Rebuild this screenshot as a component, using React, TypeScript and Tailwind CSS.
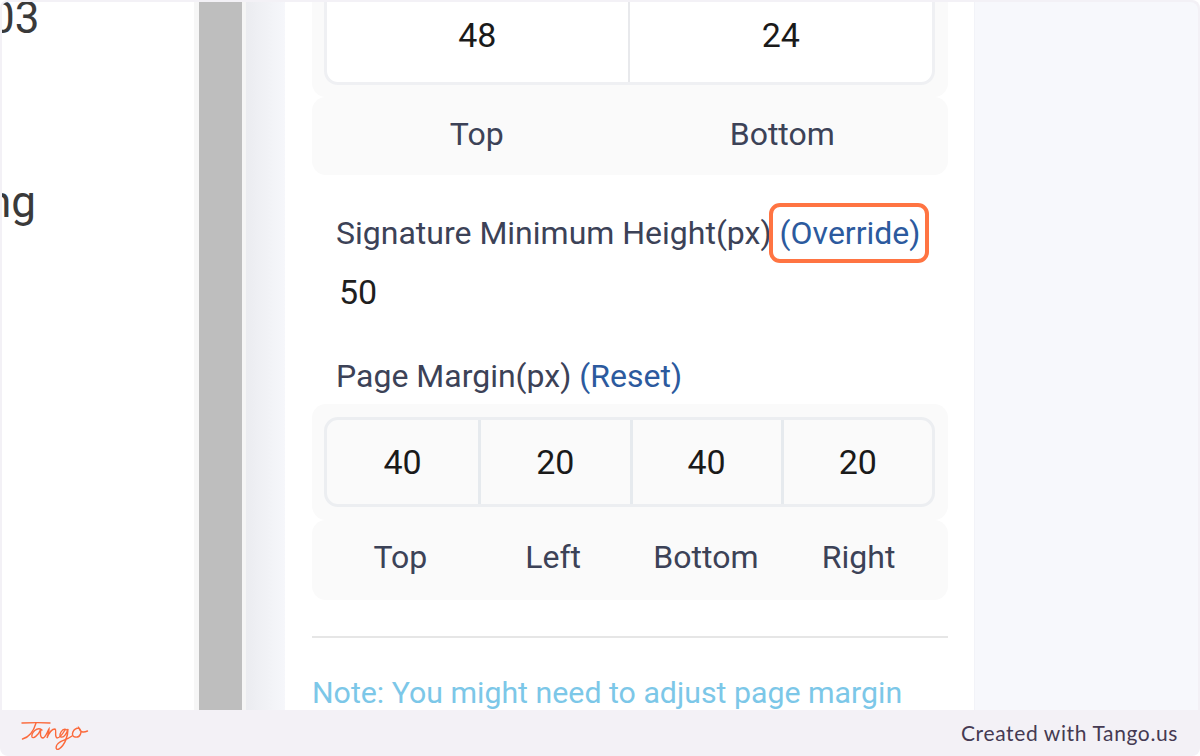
const font = { fontFamily: "Roboto, sans-serif" };

function Cells({ values, labels, white }: { values: string[]; labels: string[]; white?: boolean }) {
  const cols = values.length === 2 ? "grid-cols-2" : "grid-cols-4";
  return (
    <div className="flex flex-col">
      <div className={`rounded-[14px] bg-[#fafafa] pl-[12px] pr-[13px] ${white ? "-mt-[30px] pt-[13px] pb-[12px]" : "py-[13px]"}`}>
        <div
          className={`grid ${cols} rounded-[14px] text-[34px] text-[#1a1a1a] ${
            white ? "h-[100px] border-[3px] border-[#eff0f3] bg-white" : "h-[90px] border-[3px] border-[#eceef1] bg-[#fafafa]"
          }`}
        >
          {values.map((v, i) => (
            <div
              key={i}
              className={`flex items-center justify-center ${
                white
                  ? i < values.length - 1
                    ? "border-r-2 border-[#e8e9ec]"
                    : ""
                  : i > 0
                    ? "border-l-[3px] border-[#e6eaee]"
                    : ""
              }`}
            >
              {v}
            </div>
          ))}
        </div>
      </div>
      <div
        className={`grid ${cols} items-center rounded-[14px] bg-[#fafafa] pl-[12px] pr-[13px] text-[32px] text-[#3c4257] ${
          white ? "h-[78px] pb-[4px]" : "h-[80px] pb-[6px]"
        }`}
      >
        {labels.map((l) => (
          <div key={l} className="text-center">
            {l}
          </div>
        ))}
      </div>
    </div>
  );
}

export default function App() {
  return (
    <div className="relative flex h-[756px] w-[1200px] flex-col overflow-hidden rounded-[8px] bg-[#f3f1f6]" style={font}>
      <div className="flex min-h-0 flex-1 pt-[2px] pl-[2px] pr-[2px]">
        {/* left list, cut off by the crop */}
        <div className="w-[192px] shrink-0 overflow-hidden rounded-tl-[6px] bg-white text-[44px] text-[#3a3a3a]">
          <div className="-ml-[12px] -mt-[10px] leading-[52px]">03</div>
          <div className="-ml-[15px] mt-[132px] leading-[52px]">ng</div>
        </div>
        <div className="w-[5px] shrink-0 bg-[#f6f6f6]" />
        <div className="w-[43px] shrink-0 bg-[#bebebe]" />
        <div className="w-[4px] shrink-0 bg-[#f5f5f5]" />
        <div className="w-[39px] shrink-0 bg-gradient-to-r from-[#ebecf0] to-[#f6f7fb]" />

        {/* settings panel */}
        <div className="w-[689px] shrink-0 overflow-hidden bg-white pl-[27px] pr-[26px]">
          <Cells white values={["48", "24"]} labels={["Top", "Bottom"]} />

          <div className="mt-[38px] flex h-[40px] items-center pl-[24px] text-[32px] text-[#3c4257]">
            <span>Signature Minimum Height(px)</span>
            <span className="ml-[8px] text-[#2c5a9e]">(Override)</span>
          </div>
          <div className="mt-[19px] pl-[27px] text-[34px] leading-[40px] text-[#1f1f1f]">50</div>
          <div className="mt-[44px] flex h-[40px] items-center pl-[24px] text-[32px] text-[#3c4257]">
            <span>Page Margin(px)</span>
            <span className="ml-[8px] text-[#2c5a9e]">(Reset)</span>
          </div>

          <div className="mt-[8px]">
            <Cells values={["40", "20", "40", "20"]} labels={["Top", "Left", "Bottom", "Right"]} />
          </div>

          <div className="mt-[36px] h-[2px] bg-[#e6e6e6]" />
          <div className="mt-[35px] text-[30.3px] leading-[40px] whitespace-nowrap text-[#7cc7e8]">
            Note: You might need to adjust page margin
          </div>
        </div>

        <div className="flex-1 rounded-tr-[8px] border-l border-[#f2f3f8] bg-[#f7f8fc]" />
      </div>

      {/* Tango footer */}
      <div className="flex h-[46px] shrink-0 items-center justify-between pl-[21px] pr-[22px]">
        <svg width="68" height="40" viewBox="0 0 68 40" fill="none" stroke="#fb6a3c" strokeWidth="1.4" strokeLinecap="round" className="mt-[1px]">
          <path d="M1 9 C10 8.6 20 8.4 29 9" />
          <path d="M15 9 C13 16 9 23 1.5 25" />
          <path d="M21 16 C16 12 10 19 11 23 C12 25 17 22 20 15 C19 19 19 24 22 24 C25 23 26 18 28 15 C28 18 27 21 26 24 C28 19 31 15 34 15 C36 16 33 22 36 24 C39 24 41 21 44 16" />
          <path d="M46 16 C41 13 37 22 40 23 C43 24 46 19 47 15 C47 22 44 31 38 35 C34 37 34 31 39 28 C43 26 47 25 51 22" />
          <path d="M58 14 C52 14 49 22 54 23 C59 24 62 18 58 14 C59 18 62 19 66.5 17" />
        </svg>
        <span className="text-[21px] tracking-[0.62px] text-[#453a52]" style={{ fontFamily: "Lato, sans-serif" }}>
          Created with Tango.us
        </span>
      </div>

      {/* highlight around the Override link */}
      <div className="absolute left-[769px] top-[203px] h-[60px] w-[160px] rounded-[11px] border-[4px] border-[#ff7442]" />
    </div>
  );
}
